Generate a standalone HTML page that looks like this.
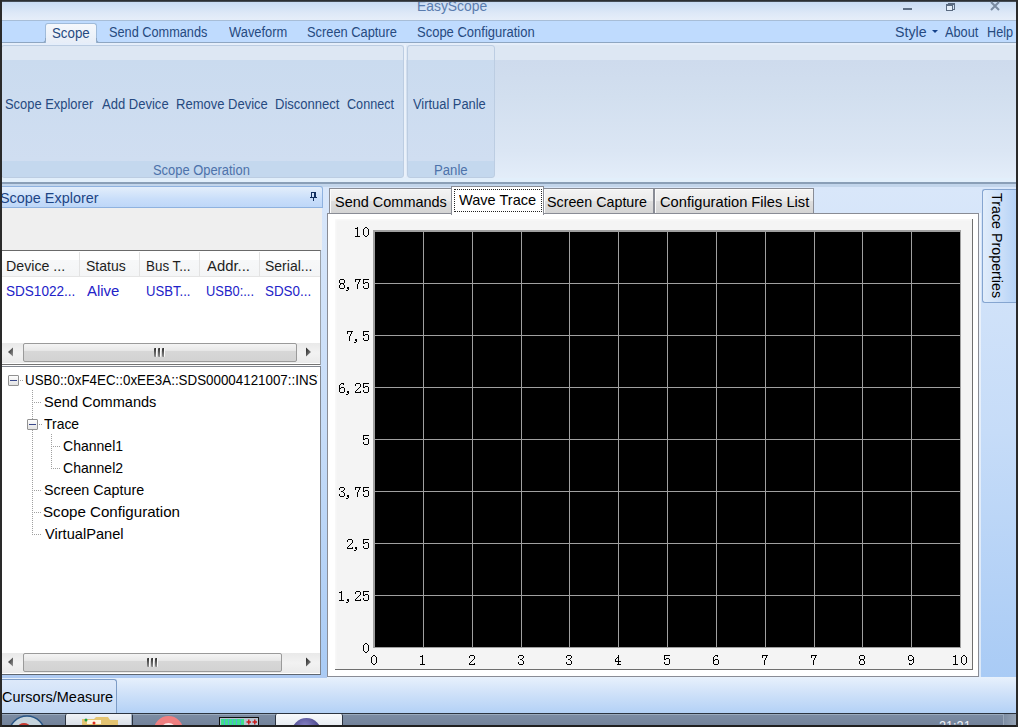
<!DOCTYPE html><html><head><meta charset="utf-8"><style>html,body{margin:0;padding:0;width:1018px;height:727px;overflow:hidden;position:relative;background:#303030}</style></head><body><div style="position:absolute;left:0px;top:0px;width:1018px;height:727px;background:#303030"></div>
<div style="position:absolute;left:2px;top:2px;width:1014px;height:18px;background:linear-gradient(#c9dbf2,#dde8f7 60%,#e6eef9)"></div>
<div style="position:absolute;left:416.79px;top:-8px;height:30px;line-height:30px;font-family:'Liberation Sans', sans-serif;font-size:13.8px;color:#5a7cae;white-space:nowrap;transform:scaleX(1.0059);transform-origin:0 0;">EasyScope</div>
<div style="position:absolute;left:2px;top:0px;width:1014px;height:2px;background:linear-gradient(#202020,#505a66)"></div>
<div style="position:absolute;left:903px;top:8px;width:9px;height:2px;background:#5e6e84"></div>
<svg style="position:absolute;left:0;top:0" width="1018" height="14" shape-rendering="crispEdges"><path fill="#e6eef8" d="M947 6h5v4h-5z"/><path fill="#5a6a80" d="M948 3h7v1h-7z M953 4h2v1h-2z M954 5h1v5h-1z M953 9h1v1h-1z M946 4h7v2h-7z M946 6h1v5h-1z M952 6h1v5h-1z M946 10h7v1h-7z"/></svg>
<svg style="position:absolute;left:988px;top:0px" width="14" height="12"><path d="M3 2 L11 10 M11 2 L3 10" stroke="#7a8aa0" stroke-width="2"/></svg>
<div style="position:absolute;left:2px;top:20px;width:1014px;height:1px;background:#a7bdd7"></div>
<div style="position:absolute;left:2px;top:21px;width:1014px;height:21px;background:#bfdbfe"></div>
<div style="position:absolute;left:2px;top:42px;width:1014px;height:1px;background:#8ea6c1"></div>
<div style="position:absolute;left:45px;top:23px;width:50px;height:20px;border:1px solid #a0bbda;border-bottom:none;border-radius:3px 3px 0 0;background:linear-gradient(#f5f8fc,#e6edf7)"></div>
<div style="position:absolute;left:41px;top:38px;width:4px;height:4px;border-right:1px solid #8ea6c1;border-bottom:1px solid #8ea6c1;border-bottom-right-radius:3px;background:#bfdbfe"></div>
<div style="position:absolute;left:96px;top:38px;width:4px;height:4px;border-left:1px solid #8ea6c1;border-bottom:1px solid #8ea6c1;border-bottom-left-radius:3px;background:#bfdbfe"></div>
<div style="position:absolute;left:51.64px;top:19px;height:30px;line-height:30px;font-family:'Liberation Sans', sans-serif;font-size:13.8px;color:#264a80;white-space:nowrap;transform:scaleX(0.9632);transform-origin:0 0;">Scope</div>
<div style="position:absolute;left:108.58px;top:18px;height:30px;line-height:30px;font-family:'Liberation Sans', sans-serif;font-size:13.8px;color:#264a80;white-space:nowrap;transform:scaleX(0.9226);transform-origin:0 0;">Send Commands</div>
<div style="position:absolute;left:228.50px;top:18px;height:30px;line-height:30px;font-family:'Liberation Sans', sans-serif;font-size:13.8px;color:#264a80;white-space:nowrap;transform:scaleX(0.9355);transform-origin:0 0;">Waveform</div>
<div style="position:absolute;left:307.47px;top:18px;height:30px;line-height:30px;font-family:'Liberation Sans', sans-serif;font-size:13.8px;color:#264a80;white-space:nowrap;transform:scaleX(0.9305);transform-origin:0 0;">Screen Capture</div>
<div style="position:absolute;left:417.26px;top:18px;height:30px;line-height:30px;font-family:'Liberation Sans', sans-serif;font-size:13.8px;color:#264a80;white-space:nowrap;transform:scaleX(0.9415);transform-origin:0 0;">Scope Configuration</div>
<div style="position:absolute;left:895.27px;top:18px;height:30px;line-height:30px;font-family:'Liberation Sans', sans-serif;font-size:13.8px;color:#264a80;white-space:nowrap;transform:scaleX(1.0276);transform-origin:0 0;">Style</div>
<svg style="position:absolute;left:932px;top:30px" width="6" height="4"><path d="M0 0 L6 0 L3 3 Z" fill="#15428b"/></svg>
<div style="position:absolute;left:945.00px;top:18px;height:30px;line-height:30px;font-family:'Liberation Sans', sans-serif;font-size:13.8px;color:#264a80;white-space:nowrap;transform:scaleX(0.9250);transform-origin:0 0;">About</div>
<div style="position:absolute;left:987.08px;top:18px;height:30px;line-height:30px;font-family:'Liberation Sans', sans-serif;font-size:13.8px;color:#264a80;white-space:nowrap;transform:scaleX(0.9185);transform-origin:0 0;">Help</div>
<div style="position:absolute;left:2px;top:43px;width:1014px;height:135px;background:linear-gradient(#dde7f3 0,#dde7f3 17px,#cedbed 17px,#d2dfef 40%,#dbe6f4 80%,#e3edf9 100%)"></div>
<div style="position:absolute;left:2px;top:43px;width:1014px;height:2px;background:#e5eefa"></div>
<div style="position:absolute;left:1px;top:45px;width:401px;height:131px;border:1px solid #bccde2;border-radius:3px;background:linear-gradient(#dde7f3 0,#dde7f3 14px,#cadbef 14px,#d0def1 115px,#c4d8ee 115px,#c4d8ee)"></div>
<div style="position:absolute;left:404px;top:45px;width:2px;height:132px;background:#eaf1fa"></div>
<div style="position:absolute;left:407px;top:45px;width:86px;height:131px;border:1px solid #bccde2;border-radius:3px;background:linear-gradient(#dde7f3 0,#dde7f3 14px,#cadbef 14px,#d0def1 115px,#c4d8ee 115px,#c4d8ee)"></div>
<div style="position:absolute;left:153.46px;top:156px;height:30px;line-height:30px;font-family:'Liberation Sans', sans-serif;font-size:13.8px;color:#4d72aa;white-space:nowrap;transform:scaleX(0.9353);transform-origin:0 0;">Scope Operation</div>
<div style="position:absolute;left:433.65px;top:156px;height:30px;line-height:30px;font-family:'Liberation Sans', sans-serif;font-size:13.8px;color:#4d72aa;white-space:nowrap;transform:scaleX(0.9529);transform-origin:0 0;">Panle</div>
<div style="position:absolute;left:5.26px;top:90px;height:30px;line-height:30px;font-family:'Liberation Sans', sans-serif;font-size:13.8px;color:#264a80;white-space:nowrap;transform:scaleX(0.9362);transform-origin:0 0;">Scope Explorer</div>
<div style="position:absolute;left:101.70px;top:90px;height:30px;line-height:30px;font-family:'Liberation Sans', sans-serif;font-size:13.8px;color:#264a80;white-space:nowrap;transform:scaleX(0.9443);transform-origin:0 0;">Add Device</div>
<div style="position:absolute;left:175.56px;top:90px;height:30px;line-height:30px;font-family:'Liberation Sans', sans-serif;font-size:13.8px;color:#264a80;white-space:nowrap;transform:scaleX(0.9427);transform-origin:0 0;">Remove Device</div>
<div style="position:absolute;left:274.56px;top:90px;height:30px;line-height:30px;font-family:'Liberation Sans', sans-serif;font-size:13.8px;color:#264a80;white-space:nowrap;transform:scaleX(0.9441);transform-origin:0 0;">Disconnect</div>
<div style="position:absolute;left:347.20px;top:90px;height:30px;line-height:30px;font-family:'Liberation Sans', sans-serif;font-size:13.8px;color:#264a80;white-space:nowrap;transform:scaleX(0.9154);transform-origin:0 0;">Connect</div>
<div style="position:absolute;left:413.40px;top:90px;height:30px;line-height:30px;font-family:'Liberation Sans', sans-serif;font-size:13.8px;color:#264a80;white-space:nowrap;transform:scaleX(0.9333);transform-origin:0 0;">Virtual Panle</div>
<div style="position:absolute;left:2px;top:178px;width:1014px;height:4px;background:#e2effb"></div>
<div style="position:absolute;left:2px;top:182px;width:1014px;height:2px;background:#8a9fb7"></div>
<div style="position:absolute;left:2px;top:184px;width:1014px;height:3px;background:#c2d5eb"></div>
<div style="position:absolute;left:2px;top:187px;width:1014px;height:490px;background:linear-gradient(#d9e7fa,#c6dcf8 50%,#a9cbf5)"></div>
<div style="position:absolute;left:2px;top:677px;width:1014px;height:36px;background:linear-gradient(#e8f1fc,#d2e3f9 40%,#b3d1f6)"></div>
<div style="position:absolute;left:2px;top:675px;width:325px;height:3px;background:#aecaf2"></div>
<div style="position:absolute;left:2px;top:186px;width:320px;height:20px;border:1px solid #8fb2df;border-left:none;border-radius:0 3px 0 0;background:linear-gradient(#e3eefb,#c9defa 60%,#bed7f8)"></div>
<div style="position:absolute;left:-0.06px;top:183px;height:30px;line-height:30px;font-family:'Liberation Sans', sans-serif;font-size:15.0px;color:#1d4585;white-space:nowrap;transform:scaleX(0.9608);transform-origin:0 0;">Scope Explorer</div>
<svg style="position:absolute;left:309px;top:192px" width="10" height="10" shape-rendering="crispEdges"><path fill="#13305f" d="M2 0h5v1h-5z M2 1h1v4h-1z M5 1h2v4h-2z M1 5h7v1h-7z M4 6h1v3h-1z"/></svg>
<div style="position:absolute;left:2px;top:208px;width:320px;height:42px;background:#efefef"></div>
<div style="position:absolute;left:2px;top:250px;width:318px;height:114px;background:#fff;border-top:1px solid #6a6a6a;border-right:1px solid #9aa0a8"></div>
<div style="position:absolute;left:2px;top:251px;width:318px;height:25px;background:linear-gradient(#fff 0,#fff 9px,#f7f8f9 9px,#f4f5f6)"></div>
<div style="position:absolute;left:2px;top:276px;width:318px;height:1px;background:#e5e5e5"></div>
<div style="position:absolute;left:79px;top:252px;width:1px;height:24px;background:#e3e3e3"></div>
<div style="position:absolute;left:139px;top:252px;width:1px;height:24px;background:#e3e3e3"></div>
<div style="position:absolute;left:199px;top:252px;width:1px;height:24px;background:#e3e3e3"></div>
<div style="position:absolute;left:259px;top:252px;width:1px;height:24px;background:#e3e3e3"></div>
<div style="position:absolute;left:6.41px;top:251px;height:30px;line-height:30px;font-family:'Liberation Sans', sans-serif;font-size:14.3px;color:#1e1e1e;white-space:nowrap;transform:scaleX(0.9931);transform-origin:0 0;">Device ...</div>
<div style="position:absolute;left:6.45px;top:276px;height:30px;line-height:30px;font-family:'Liberation Sans', sans-serif;font-size:14.3px;color:#2222c8;white-space:nowrap;transform:scaleX(0.9479);transform-origin:0 0;">SDS1022...</div>
<div style="position:absolute;left:85.52px;top:251px;height:30px;line-height:30px;font-family:'Liberation Sans', sans-serif;font-size:14.3px;color:#1e1e1e;white-space:nowrap;transform:scaleX(0.9800);transform-origin:0 0;">Status</div>
<div style="position:absolute;left:86.50px;top:276px;height:30px;line-height:30px;font-family:'Liberation Sans', sans-serif;font-size:14.3px;color:#2222c8;white-space:nowrap;transform:scaleX(1.0419);transform-origin:0 0;">Alive</div>
<div style="position:absolute;left:145.66px;top:251px;height:30px;line-height:30px;font-family:'Liberation Sans', sans-serif;font-size:14.3px;color:#1e1e1e;white-space:nowrap;transform:scaleX(0.9370);transform-origin:0 0;">Bus T...</div>
<div style="position:absolute;left:145.68px;top:276px;height:30px;line-height:30px;font-family:'Liberation Sans', sans-serif;font-size:14.3px;color:#2222c8;white-space:nowrap;transform:scaleX(0.9170);transform-origin:0 0;">USBT...</div>
<div style="position:absolute;left:206.50px;top:251px;height:30px;line-height:30px;font-family:'Liberation Sans', sans-serif;font-size:14.3px;color:#1e1e1e;white-space:nowrap;transform:scaleX(1.0375);transform-origin:0 0;">Addr...</div>
<div style="position:absolute;left:205.60px;top:276px;height:30px;line-height:30px;font-family:'Liberation Sans', sans-serif;font-size:14.3px;color:#2222c8;white-space:nowrap;transform:scaleX(0.9020);transform-origin:0 0;">USB0:...</div>
<div style="position:absolute;left:265.02px;top:251px;height:30px;line-height:30px;font-family:'Liberation Sans', sans-serif;font-size:14.3px;color:#1e1e1e;white-space:nowrap;transform:scaleX(0.9787);transform-origin:0 0;">Serial...</div>
<div style="position:absolute;left:265.06px;top:276px;height:30px;line-height:30px;font-family:'Liberation Sans', sans-serif;font-size:14.3px;color:#2222c8;white-space:nowrap;transform:scaleX(0.9362);transform-origin:0 0;">SDS0...</div>
<div style="position:absolute;left:2px;top:343px;width:318px;height:20px;background:linear-gradient(#e9e9e9,#f2f2f2 50%,#eaeaea)"></div>
<svg style="position:absolute;left:7px;top:347px" width="8" height="11"><defs><linearGradient id="ga343" x1="0" y1="0" x2="1" y2="1"><stop offset="0" stop-color="#202020"/><stop offset="1" stop-color="#9a9a9a"/></linearGradient></defs><path d="M6 0.5 L6 9.5 L1 5 Z" fill="url(#ga343)"/></svg>
<svg style="position:absolute;left:305px;top:347px" width="8" height="11"><defs><linearGradient id="gb343" x1="0" y1="0" x2="1" y2="1"><stop offset="0" stop-color="#202020"/><stop offset="1" stop-color="#9a9a9a"/></linearGradient></defs><path d="M1 0.5 L1 9.5 L6 5 Z" fill="url(#gb343)"/></svg>
<div style="position:absolute;left:23px;top:343px;width:272px;height:17px;border:1px solid #9a9a9a;border-radius:2px;background:linear-gradient(#f4f4f4,#e8e8e8 38%,#d7d7d7 42%,#d2d2d2)"></div>
<div style="position:absolute;left:154px;top:348px;width:2px;height:9px;background:linear-gradient(#2e2e2e,#909090);border-right:1px solid #fafafa;border-radius:1px"></div>
<div style="position:absolute;left:158px;top:348px;width:2px;height:9px;background:linear-gradient(#2e2e2e,#909090);border-right:1px solid #fafafa;border-radius:1px"></div>
<div style="position:absolute;left:162px;top:348px;width:2px;height:9px;background:linear-gradient(#2e2e2e,#909090);border-right:1px solid #fafafa;border-radius:1px"></div>
<div style="position:absolute;left:2px;top:364px;width:318px;height:1px;background:#747474"></div>
<div style="position:absolute;left:2px;top:365px;width:318px;height:1px;background:#fdfdfd"></div>
<div style="position:absolute;left:2px;top:366px;width:319px;height:309px;background:#fff;border-top:1px solid #828790;border-right:1px solid #828790;border-bottom:1px solid #5f6670;box-sizing:border-box"></div>
<div style="position:absolute;left:2px;top:367px;width:316px;height:286px;overflow:hidden">
<div style="position:absolute;left:22.61px;top:-2px;height:30px;line-height:30px;font-family:'Liberation Sans', sans-serif;font-size:15.0px;color:#000;white-space:nowrap;transform:scaleX(0.8902);transform-origin:0 0;">USB0::0xF4EC::0xEE3A::SDS00004121007::INSTR</div>
<div style="position:absolute;left:41.53px;top:20px;height:30px;line-height:30px;font-family:'Liberation Sans', sans-serif;font-size:15.0px;color:#000;white-space:nowrap;transform:scaleX(0.9696);transform-origin:0 0;">Send Commands</div>
<div style="position:absolute;left:42.40px;top:42px;height:30px;line-height:30px;font-family:'Liberation Sans', sans-serif;font-size:15.0px;color:#000;white-space:nowrap;transform:scaleX(0.9289);transform-origin:0 0;">Trace</div>
<div style="position:absolute;left:61.10px;top:64px;height:30px;line-height:30px;font-family:'Liberation Sans', sans-serif;font-size:15.0px;color:#000;white-space:nowrap;transform:scaleX(0.9359);transform-origin:0 0;">Channel1</div>
<div style="position:absolute;left:61.10px;top:86px;height:30px;line-height:30px;font-family:'Liberation Sans', sans-serif;font-size:15.0px;color:#000;white-space:nowrap;transform:scaleX(0.9359);transform-origin:0 0;">Channel2</div>
<div style="position:absolute;left:41.55px;top:108px;height:30px;line-height:30px;font-family:'Liberation Sans', sans-serif;font-size:15.0px;color:#000;white-space:nowrap;transform:scaleX(0.9529);transform-origin:0 0;">Screen Capture</div>
<div style="position:absolute;left:41.49px;top:130px;height:30px;line-height:30px;font-family:'Liberation Sans', sans-serif;font-size:15.0px;color:#000;white-space:nowrap;transform:scaleX(1.0075);transform-origin:0 0;">Scope Configuration</div>
<div style="position:absolute;left:42.50px;top:152px;height:30px;line-height:30px;font-family:'Liberation Sans', sans-serif;font-size:15.0px;color:#000;white-space:nowrap;transform:scaleX(0.9750);transform-origin:0 0;">VirtualPanel</div>
</div>
<div style="position:absolute;left:32px;top:390px;width:1px;height:146px;background:repeating-linear-gradient(#a0a0a0 0 1px,transparent 1px 2px)"></div>
<div style="position:absolute;left:34px;top:402px;width:8px;height:1px;background:repeating-linear-gradient(90deg,#a0a0a0 0 1px,transparent 1px 2px)"></div>
<div style="position:absolute;left:34px;top:490px;width:8px;height:1px;background:repeating-linear-gradient(90deg,#a0a0a0 0 1px,transparent 1px 2px)"></div>
<div style="position:absolute;left:34px;top:512px;width:8px;height:1px;background:repeating-linear-gradient(90deg,#a0a0a0 0 1px,transparent 1px 2px)"></div>
<div style="position:absolute;left:34px;top:534px;width:8px;height:1px;background:repeating-linear-gradient(90deg,#a0a0a0 0 1px,transparent 1px 2px)"></div>
<div style="position:absolute;left:20px;top:380px;width:4px;height:1px;background:repeating-linear-gradient(90deg,#a0a0a0 0 1px,transparent 1px 2px)"></div>
<div style="position:absolute;left:39px;top:424px;width:4px;height:1px;background:repeating-linear-gradient(90deg,#a0a0a0 0 1px,transparent 1px 2px)"></div>
<div style="position:absolute;left:51px;top:434px;width:1px;height:36px;background:repeating-linear-gradient(#a0a0a0 0 1px,transparent 1px 2px)"></div>
<div style="position:absolute;left:53px;top:446px;width:8px;height:1px;background:repeating-linear-gradient(90deg,#a0a0a0 0 1px,transparent 1px 2px)"></div>
<div style="position:absolute;left:53px;top:468px;width:8px;height:1px;background:repeating-linear-gradient(90deg,#a0a0a0 0 1px,transparent 1px 2px)"></div>
<div style="position:absolute;left:8px;top:375px;width:9px;height:9px;border:1px solid #919191;border-radius:1px;background:linear-gradient(#fdfdfd,#e2e2e2)"></div>
<div style="position:absolute;left:10px;top:380px;width:7px;height:1px;background:#39488a"></div>
<div style="position:absolute;left:27px;top:419px;width:9px;height:9px;border:1px solid #919191;border-radius:1px;background:linear-gradient(#fdfdfd,#e2e2e2)"></div>
<div style="position:absolute;left:29px;top:424px;width:7px;height:1px;background:#39488a"></div>
<div style="position:absolute;left:2px;top:653px;width:318px;height:20px;background:linear-gradient(#e9e9e9,#f2f2f2 50%,#eaeaea)"></div>
<svg style="position:absolute;left:7px;top:657px" width="8" height="11"><defs><linearGradient id="ga653" x1="0" y1="0" x2="1" y2="1"><stop offset="0" stop-color="#202020"/><stop offset="1" stop-color="#9a9a9a"/></linearGradient></defs><path d="M6 0.5 L6 9.5 L1 5 Z" fill="url(#ga653)"/></svg>
<svg style="position:absolute;left:305px;top:657px" width="8" height="11"><defs><linearGradient id="gb653" x1="0" y1="0" x2="1" y2="1"><stop offset="0" stop-color="#202020"/><stop offset="1" stop-color="#9a9a9a"/></linearGradient></defs><path d="M1 0.5 L1 9.5 L6 5 Z" fill="url(#gb653)"/></svg>
<div style="position:absolute;left:23px;top:653px;width:257px;height:17px;border:1px solid #9a9a9a;border-radius:2px;background:linear-gradient(#f4f4f4,#e8e8e8 38%,#d7d7d7 42%,#d2d2d2)"></div>
<div style="position:absolute;left:147px;top:658px;width:2px;height:9px;background:linear-gradient(#2e2e2e,#909090);border-right:1px solid #fafafa;border-radius:1px"></div>
<div style="position:absolute;left:151px;top:658px;width:2px;height:9px;background:linear-gradient(#2e2e2e,#909090);border-right:1px solid #fafafa;border-radius:1px"></div>
<div style="position:absolute;left:155px;top:658px;width:2px;height:9px;background:linear-gradient(#2e2e2e,#909090);border-right:1px solid #fafafa;border-radius:1px"></div>
<div style="position:absolute;left:327px;top:213px;width:652px;height:464px;background:#fff;border:1px solid #898c95;box-sizing:border-box"></div>
<div style="position:absolute;left:329px;top:188px;width:121px;height:24px;border:1px solid #898c95;border-bottom:none;background:linear-gradient(#f3f3f3,#ececec 50%,#dfdfdf 51%,#d4d4d4);box-shadow:inset 1px 1px #fbfbfb"></div>
<div style="position:absolute;left:543px;top:188px;width:109px;height:24px;border:1px solid #898c95;border-bottom:none;background:linear-gradient(#f3f3f3,#ececec 50%,#dfdfdf 51%,#d4d4d4);box-shadow:inset 1px 1px #fbfbfb"></div>
<div style="position:absolute;left:654px;top:188px;width:158px;height:24px;border:1px solid #898c95;border-bottom:none;background:linear-gradient(#f3f3f3,#ececec 50%,#dfdfdf 51%,#d4d4d4);box-shadow:inset 1px 1px #fbfbfb"></div>
<div style="position:absolute;left:451px;top:186px;width:91px;height:28px;border:1px solid #898c95;border-bottom:none;background:#fff"></div>
<div style="position:absolute;left:334.63px;top:187px;height:30px;line-height:30px;font-family:'Liberation Sans', sans-serif;font-size:15.0px;color:#000;white-space:nowrap;transform:scaleX(0.9652);transform-origin:0 0;">Send Commands</div>
<div style="position:absolute;left:547.35px;top:187px;height:30px;line-height:30px;font-family:'Liberation Sans', sans-serif;font-size:15.0px;color:#000;white-space:nowrap;transform:scaleX(0.9519);transform-origin:0 0;">Screen Capture</div>
<div style="position:absolute;left:660.30px;top:187px;height:30px;line-height:30px;font-family:'Liberation Sans', sans-serif;font-size:15.0px;color:#000;white-space:nowrap;transform:scaleX(0.9784);transform-origin:0 0;">Configuration Files List</div>
<div style="position:absolute;left:459.00px;top:185px;height:30px;line-height:30px;font-family:'Liberation Sans', sans-serif;font-size:15.0px;color:#000;white-space:nowrap;transform:scaleX(0.9709);transform-origin:0 0;">Wave Trace</div>
<div style="position:absolute;left:454px;top:189px;width:88px;height:23px;border:1px dotted #222;border-radius:1px;box-sizing:border-box"></div>
<div style="position:absolute;left:335px;top:219px;width:637px;height:450px;background:#f4f4f4;border-right:1px solid #6f6f6f;border-bottom:1px solid #6f6f6f;box-shadow:inset 1px 1px 2px #fafafa"></div>
<div style="position:absolute;left:373px;top:230px;width:588px;height:418px;background:#a0a0a0"></div>
<div style="position:absolute;left:375px;top:232px;width:585px;height:415px;background:#000"></div>
<div style="position:absolute;left:423px;top:232px;width:1px;height:415px;background:#a0a0a0"></div>
<div style="position:absolute;left:472px;top:232px;width:1px;height:415px;background:#a0a0a0"></div>
<div style="position:absolute;left:521px;top:232px;width:1px;height:415px;background:#a0a0a0"></div>
<div style="position:absolute;left:569px;top:232px;width:1px;height:415px;background:#a0a0a0"></div>
<div style="position:absolute;left:618px;top:232px;width:1px;height:415px;background:#a0a0a0"></div>
<div style="position:absolute;left:667px;top:232px;width:1px;height:415px;background:#a0a0a0"></div>
<div style="position:absolute;left:716px;top:232px;width:1px;height:415px;background:#a0a0a0"></div>
<div style="position:absolute;left:765px;top:232px;width:1px;height:415px;background:#a0a0a0"></div>
<div style="position:absolute;left:814px;top:232px;width:1px;height:415px;background:#a0a0a0"></div>
<div style="position:absolute;left:862px;top:232px;width:1px;height:415px;background:#a0a0a0"></div>
<div style="position:absolute;left:911px;top:232px;width:1px;height:415px;background:#a0a0a0"></div>
<div style="position:absolute;left:375px;top:283px;width:585px;height:1px;background:#a0a0a0"></div>
<div style="position:absolute;left:375px;top:335px;width:585px;height:1px;background:#a0a0a0"></div>
<div style="position:absolute;left:375px;top:387px;width:585px;height:1px;background:#a0a0a0"></div>
<div style="position:absolute;left:375px;top:439px;width:585px;height:1px;background:#a0a0a0"></div>
<div style="position:absolute;left:375px;top:491px;width:585px;height:1px;background:#a0a0a0"></div>
<div style="position:absolute;left:375px;top:543px;width:585px;height:1px;background:#a0a0a0"></div>
<div style="position:absolute;left:375px;top:595px;width:585px;height:1px;background:#a0a0a0"></div>
<div style="position:absolute;left:375px;top:647px;width:586px;height:1px;background:#a0a0a0"></div>
<svg style="position:absolute;left:0;top:0" width="1018" height="727" shape-rendering="crispEdges"><path fill="#000" d="M357 227h1v1h-1zM355 228h3v1h-3zM357 229h1v1h-1zM357 230h1v1h-1zM357 231h1v1h-1zM357 232h1v1h-1zM357 233h1v1h-1zM357 234h1v1h-1zM357 235h1v1h-1zM355 236h5v1h-5zM365 227h2v1h-2zM364 228h1v1h-1zM367 228h1v1h-1zM363 229h1v1h-1zM368 229h1v1h-1zM363 230h1v1h-1zM368 230h1v1h-1zM363 231h1v1h-1zM368 231h1v1h-1zM363 232h1v1h-1zM368 232h1v1h-1zM363 233h1v1h-1zM368 233h1v1h-1zM363 234h1v1h-1zM368 234h1v1h-1zM364 235h1v1h-1zM367 235h1v1h-1zM365 236h2v1h-2zM340 279h4v1h-4zM339 280h1v1h-1zM344 280h1v1h-1zM339 281h1v1h-1zM344 281h1v1h-1zM339 282h1v1h-1zM344 282h1v1h-1zM340 283h4v1h-4zM340 284h1v1h-1zM343 284h1v1h-1zM339 285h1v1h-1zM344 285h1v1h-1zM339 286h1v1h-1zM344 286h1v1h-1zM339 287h1v1h-1zM344 287h1v1h-1zM340 288h4v1h-4zM347 287h2v1h-2zM347 288h2v1h-2zM348 289h1v1h-1zM346 290h2v1h-2zM355 279h6v1h-6zM355 280h1v1h-1zM359 280h1v1h-1zM355 281h1v1h-1zM359 281h1v1h-1zM358 282h1v1h-1zM358 283h1v1h-1zM357 284h1v1h-1zM357 285h1v1h-1zM357 286h1v1h-1zM357 287h1v1h-1zM357 288h1v1h-1zM363 279h6v1h-6zM363 280h1v1h-1zM363 281h1v1h-1zM363 282h1v1h-1zM365 282h3v1h-3zM363 283h2v1h-2zM368 283h1v1h-1zM368 284h1v1h-1zM368 285h1v1h-1zM363 286h1v1h-1zM368 286h1v1h-1zM363 287h1v1h-1zM368 287h1v1h-1zM364 288h4v1h-4zM347 331h6v1h-6zM347 332h1v1h-1zM351 332h1v1h-1zM347 333h1v1h-1zM351 333h1v1h-1zM350 334h1v1h-1zM350 335h1v1h-1zM349 336h1v1h-1zM349 337h1v1h-1zM349 338h1v1h-1zM349 339h1v1h-1zM349 340h1v1h-1zM355 339h2v1h-2zM355 340h2v1h-2zM356 341h1v1h-1zM354 342h2v1h-2zM363 331h6v1h-6zM363 332h1v1h-1zM363 333h1v1h-1zM363 334h1v1h-1zM365 334h3v1h-3zM363 335h2v1h-2zM368 335h1v1h-1zM368 336h1v1h-1zM368 337h1v1h-1zM363 338h1v1h-1zM368 338h1v1h-1zM363 339h1v1h-1zM368 339h1v1h-1zM364 340h4v1h-4zM341 383h3v1h-3zM340 384h1v1h-1zM343 384h1v1h-1zM339 385h1v1h-1zM339 386h1v1h-1zM339 387h1v1h-1zM341 387h3v1h-3zM339 388h2v1h-2zM344 388h1v1h-1zM339 389h1v1h-1zM344 389h1v1h-1zM339 390h1v1h-1zM344 390h1v1h-1zM339 391h1v1h-1zM344 391h1v1h-1zM340 392h4v1h-4zM347 391h2v1h-2zM347 392h2v1h-2zM348 393h1v1h-1zM346 394h2v1h-2zM356 383h4v1h-4zM355 384h1v1h-1zM360 384h1v1h-1zM355 385h1v1h-1zM360 385h1v1h-1zM360 386h1v1h-1zM359 387h1v1h-1zM358 388h1v1h-1zM357 389h1v1h-1zM356 390h1v1h-1zM355 391h1v1h-1zM360 391h1v1h-1zM355 392h6v1h-6zM363 383h6v1h-6zM363 384h1v1h-1zM363 385h1v1h-1zM363 386h1v1h-1zM365 386h3v1h-3zM363 387h2v1h-2zM368 387h1v1h-1zM368 388h1v1h-1zM368 389h1v1h-1zM363 390h1v1h-1zM368 390h1v1h-1zM363 391h1v1h-1zM368 391h1v1h-1zM364 392h4v1h-4zM363 435h6v1h-6zM363 436h1v1h-1zM363 437h1v1h-1zM363 438h1v1h-1zM365 438h3v1h-3zM363 439h2v1h-2zM368 439h1v1h-1zM368 440h1v1h-1zM368 441h1v1h-1zM363 442h1v1h-1zM368 442h1v1h-1zM363 443h1v1h-1zM368 443h1v1h-1zM364 444h4v1h-4zM340 487h4v1h-4zM339 488h1v1h-1zM344 488h1v1h-1zM339 489h1v1h-1zM344 489h1v1h-1zM343 490h1v1h-1zM341 491h2v1h-2zM343 492h1v1h-1zM344 493h1v1h-1zM339 494h1v1h-1zM344 494h1v1h-1zM339 495h1v1h-1zM344 495h1v1h-1zM340 496h4v1h-4zM347 495h2v1h-2zM347 496h2v1h-2zM348 497h1v1h-1zM346 498h2v1h-2zM355 487h6v1h-6zM355 488h1v1h-1zM359 488h1v1h-1zM355 489h1v1h-1zM359 489h1v1h-1zM358 490h1v1h-1zM358 491h1v1h-1zM357 492h1v1h-1zM357 493h1v1h-1zM357 494h1v1h-1zM357 495h1v1h-1zM357 496h1v1h-1zM363 487h6v1h-6zM363 488h1v1h-1zM363 489h1v1h-1zM363 490h1v1h-1zM365 490h3v1h-3zM363 491h2v1h-2zM368 491h1v1h-1zM368 492h1v1h-1zM368 493h1v1h-1zM363 494h1v1h-1zM368 494h1v1h-1zM363 495h1v1h-1zM368 495h1v1h-1zM364 496h4v1h-4zM348 539h4v1h-4zM347 540h1v1h-1zM352 540h1v1h-1zM347 541h1v1h-1zM352 541h1v1h-1zM352 542h1v1h-1zM351 543h1v1h-1zM350 544h1v1h-1zM349 545h1v1h-1zM348 546h1v1h-1zM347 547h1v1h-1zM352 547h1v1h-1zM347 548h6v1h-6zM355 547h2v1h-2zM355 548h2v1h-2zM356 549h1v1h-1zM354 550h2v1h-2zM363 539h6v1h-6zM363 540h1v1h-1zM363 541h1v1h-1zM363 542h1v1h-1zM365 542h3v1h-3zM363 543h2v1h-2zM368 543h1v1h-1zM368 544h1v1h-1zM368 545h1v1h-1zM363 546h1v1h-1zM368 546h1v1h-1zM363 547h1v1h-1zM368 547h1v1h-1zM364 548h4v1h-4zM341 591h1v1h-1zM339 592h3v1h-3zM341 593h1v1h-1zM341 594h1v1h-1zM341 595h1v1h-1zM341 596h1v1h-1zM341 597h1v1h-1zM341 598h1v1h-1zM341 599h1v1h-1zM339 600h5v1h-5zM347 599h2v1h-2zM347 600h2v1h-2zM348 601h1v1h-1zM346 602h2v1h-2zM356 591h4v1h-4zM355 592h1v1h-1zM360 592h1v1h-1zM355 593h1v1h-1zM360 593h1v1h-1zM360 594h1v1h-1zM359 595h1v1h-1zM358 596h1v1h-1zM357 597h1v1h-1zM356 598h1v1h-1zM355 599h1v1h-1zM360 599h1v1h-1zM355 600h6v1h-6zM363 591h6v1h-6zM363 592h1v1h-1zM363 593h1v1h-1zM363 594h1v1h-1zM365 594h3v1h-3zM363 595h2v1h-2zM368 595h1v1h-1zM368 596h1v1h-1zM368 597h1v1h-1zM363 598h1v1h-1zM368 598h1v1h-1zM363 599h1v1h-1zM368 599h1v1h-1zM364 600h4v1h-4zM365 643h2v1h-2zM364 644h1v1h-1zM367 644h1v1h-1zM363 645h1v1h-1zM368 645h1v1h-1zM363 646h1v1h-1zM368 646h1v1h-1zM363 647h1v1h-1zM368 647h1v1h-1zM363 648h1v1h-1zM368 648h1v1h-1zM363 649h1v1h-1zM368 649h1v1h-1zM363 650h1v1h-1zM368 650h1v1h-1zM364 651h1v1h-1zM367 651h1v1h-1zM365 652h2v1h-2zM373 655h2v1h-2zM372 656h1v1h-1zM375 656h1v1h-1zM371 657h1v1h-1zM376 657h1v1h-1zM371 658h1v1h-1zM376 658h1v1h-1zM371 659h1v1h-1zM376 659h1v1h-1zM371 660h1v1h-1zM376 660h1v1h-1zM371 661h1v1h-1zM376 661h1v1h-1zM371 662h1v1h-1zM376 662h1v1h-1zM372 663h1v1h-1zM375 663h1v1h-1zM373 664h2v1h-2zM422 655h1v1h-1zM420 656h3v1h-3zM422 657h1v1h-1zM422 658h1v1h-1zM422 659h1v1h-1zM422 660h1v1h-1zM422 661h1v1h-1zM422 662h1v1h-1zM422 663h1v1h-1zM420 664h5v1h-5zM470 655h4v1h-4zM469 656h1v1h-1zM474 656h1v1h-1zM469 657h1v1h-1zM474 657h1v1h-1zM474 658h1v1h-1zM473 659h1v1h-1zM472 660h1v1h-1zM471 661h1v1h-1zM470 662h1v1h-1zM469 663h1v1h-1zM474 663h1v1h-1zM469 664h6v1h-6zM519 655h4v1h-4zM518 656h1v1h-1zM523 656h1v1h-1zM518 657h1v1h-1zM523 657h1v1h-1zM522 658h1v1h-1zM520 659h2v1h-2zM522 660h1v1h-1zM523 661h1v1h-1zM518 662h1v1h-1zM523 662h1v1h-1zM518 663h1v1h-1zM523 663h1v1h-1zM519 664h4v1h-4zM567 655h4v1h-4zM566 656h1v1h-1zM571 656h1v1h-1zM566 657h1v1h-1zM571 657h1v1h-1zM570 658h1v1h-1zM568 659h2v1h-2zM570 660h1v1h-1zM571 661h1v1h-1zM566 662h1v1h-1zM571 662h1v1h-1zM566 663h1v1h-1zM571 663h1v1h-1zM567 664h4v1h-4zM618 655h1v1h-1zM618 656h1v1h-1zM617 657h2v1h-2zM616 658h1v1h-1zM618 658h1v1h-1zM615 659h1v1h-1zM618 659h1v1h-1zM615 660h1v1h-1zM618 660h1v1h-1zM615 661h6v1h-6zM618 662h1v1h-1zM618 663h1v1h-1zM617 664h4v1h-4zM664 655h6v1h-6zM664 656h1v1h-1zM664 657h1v1h-1zM664 658h1v1h-1zM666 658h3v1h-3zM664 659h2v1h-2zM669 659h1v1h-1zM669 660h1v1h-1zM669 661h1v1h-1zM664 662h1v1h-1zM669 662h1v1h-1zM664 663h1v1h-1zM669 663h1v1h-1zM665 664h4v1h-4zM715 655h3v1h-3zM714 656h1v1h-1zM717 656h1v1h-1zM713 657h1v1h-1zM713 658h1v1h-1zM713 659h1v1h-1zM715 659h3v1h-3zM713 660h2v1h-2zM718 660h1v1h-1zM713 661h1v1h-1zM718 661h1v1h-1zM713 662h1v1h-1zM718 662h1v1h-1zM713 663h1v1h-1zM718 663h1v1h-1zM714 664h4v1h-4zM762 655h6v1h-6zM762 656h1v1h-1zM766 656h1v1h-1zM762 657h1v1h-1zM766 657h1v1h-1zM765 658h1v1h-1zM765 659h1v1h-1zM764 660h1v1h-1zM764 661h1v1h-1zM764 662h1v1h-1zM764 663h1v1h-1zM764 664h1v1h-1zM811 655h6v1h-6zM811 656h1v1h-1zM815 656h1v1h-1zM811 657h1v1h-1zM815 657h1v1h-1zM814 658h1v1h-1zM814 659h1v1h-1zM813 660h1v1h-1zM813 661h1v1h-1zM813 662h1v1h-1zM813 663h1v1h-1zM813 664h1v1h-1zM860 655h4v1h-4zM859 656h1v1h-1zM864 656h1v1h-1zM859 657h1v1h-1zM864 657h1v1h-1zM859 658h1v1h-1zM864 658h1v1h-1zM860 659h4v1h-4zM860 660h1v1h-1zM863 660h1v1h-1zM859 661h1v1h-1zM864 661h1v1h-1zM859 662h1v1h-1zM864 662h1v1h-1zM859 663h1v1h-1zM864 663h1v1h-1zM860 664h4v1h-4zM909 655h3v1h-3zM908 656h1v1h-1zM912 656h1v1h-1zM908 657h1v1h-1zM913 657h1v1h-1zM908 658h1v1h-1zM913 658h1v1h-1zM908 659h1v1h-1zM912 659h2v1h-2zM909 660h3v1h-3zM913 660h1v1h-1zM913 661h1v1h-1zM913 662h1v1h-1zM909 663h1v1h-1zM912 663h1v1h-1zM909 664h3v1h-3zM955 655h1v1h-1zM953 656h3v1h-3zM955 657h1v1h-1zM955 658h1v1h-1zM955 659h1v1h-1zM955 660h1v1h-1zM955 661h1v1h-1zM955 662h1v1h-1zM955 663h1v1h-1zM953 664h5v1h-5zM963 655h2v1h-2zM962 656h1v1h-1zM965 656h1v1h-1zM961 657h1v1h-1zM966 657h1v1h-1zM961 658h1v1h-1zM966 658h1v1h-1zM961 659h1v1h-1zM966 659h1v1h-1zM961 660h1v1h-1zM966 660h1v1h-1zM961 661h1v1h-1zM966 661h1v1h-1zM961 662h1v1h-1zM966 662h1v1h-1zM962 663h1v1h-1zM965 663h1v1h-1zM963 664h2v1h-2z"/></svg>
<div style="position:absolute;left:979px;top:213px;width:2px;height:464px;background:linear-gradient(#eef4fc,#dbe8f8)"></div>
<div style="position:absolute;left:982px;top:189px;width:34px;height:112px;border:1px solid #85a5d0;border-right:none;border-radius:3px 0 0 3px;background:linear-gradient(90deg,#e1edfb,#c8ddf8 60%,#b4d2f7)"></div>
<div style="position:absolute;left:1012.00px;top:193.20px;width:0;height:0"><div style="position:absolute;left:0;top:0;height:30px;line-height:30px;font-family:'Liberation Sans', sans-serif;font-size:15.0px;color:#000;white-space:nowrap;transform-origin:0 0;transform:rotate(90deg) scaleX(0.9527);">Trace Properties</div></div>
<div style="position:absolute;left:2px;top:679px;width:114px;height:34px;border:1px solid #7d9cc6;border-left:none;border-bottom:none;border-radius:0 3px 0 0;background:linear-gradient(#dde9fa,#c5dbf7)"></div>
<div style="position:absolute;left:1.90px;top:682px;height:30px;line-height:30px;font-family:'Liberation Sans', sans-serif;font-size:15.0px;color:#000;white-space:nowrap;transform:scaleX(0.9661);transform-origin:0 0;">Cursors/Measure</div>
<div style="position:absolute;left:2px;top:713px;width:1014px;height:1px;background:#2c3440"></div>
<div style="position:absolute;left:2px;top:714px;width:1014px;height:12px;background:linear-gradient(#9aaabd 0,#9aaabd 1px,#7c8ca3 1px,#72829a)"></div>
<svg style="position:absolute;left:2px;top:714px" width="60" height="12"><circle cx="25" cy="20" r="18" fill="#c5d3dc" stroke="#2a5686" stroke-width="1.6"/><ellipse cx="22" cy="13" rx="6" ry="4" fill="#c83a30"/></svg>
<div style="position:absolute;left:65px;top:714px;width:66px;height:12px;background:linear-gradient(#f0f3f7,#d8dee6);border-left:1px solid #2c3440;border-right:1px solid #2c3440;border-radius:2px 2px 0 0"></div>
<svg style="position:absolute;left:80px;top:717px" width="40" height="9"><path d="M2 2 L14 2 L16 0 L28 0 L30 3 L38 3 L38 9 L2 9 Z" fill="#e4c472"/><rect x="7" y="3" width="14" height="4" fill="#fff6e0"/><circle cx="6" cy="3" r="1.5" fill="#20a040"/><circle cx="14" cy="6" r="1.5" fill="#e03020"/></svg>
<div style="position:absolute;left:131px;top:714px;width:1px;height:12px;background:#a0aec0"></div>
<svg style="position:absolute;left:150px;top:714px" width="38" height="12"><circle cx="18.5" cy="17" r="11.5" fill="#fbeaea" stroke="#ef7f80" stroke-width="7"/></svg>
<div style="position:absolute;left:219px;top:717px;width:38px;height:10px;background:#b8c4d0;border:1px solid #101010"></div>
<div style="position:absolute;left:221px;top:719px;width:23px;height:8px;background:repeating-linear-gradient(90deg,#3ee08e 0 3px,#58a8d8 3px 4px)"></div>
<svg style="position:absolute;left:246px;top:718px" width="12" height="8"><path d="M0.5 4 H5 M2.8 1.5 V6.5 M6.5 4 H11 M8.8 1.5 V6.5" stroke="#c81818" stroke-width="1.4"/></svg>
<div style="position:absolute;left:275px;top:714px;width:66px;height:12px;background:linear-gradient(#f8fafc,#e6ebf1);border-left:1px solid #2c3440;border-right:1px solid #2c3440;border-radius:2px 2px 0 0"></div>
<svg style="position:absolute;left:290px;top:717px" width="34" height="10"><defs><radialGradient id="sph" cx="0.45" cy="0.3" r="0.7"><stop offset="0" stop-color="#8a86c8"/><stop offset="1" stop-color="#2e2a70"/></radialGradient></defs><circle cx="16.5" cy="16" r="15" fill="url(#sph)"/></svg>
<div style="position:absolute;left:938.80px;top:712px;height:30px;line-height:30px;font-family:'Liberation Sans', sans-serif;font-size:13.8px;color:#eef2f6;white-space:nowrap;transform:scaleX(0.9176);transform-origin:0 0;">21:21</div>
<div style="position:absolute;left:1003px;top:714px;width:1px;height:12px;background:#9aa8ba"></div>
<div style="position:absolute;left:1004px;top:714px;width:12px;height:12px;background:linear-gradient(90deg,#7e8ea4,#96a4b6)"></div>
<div style="position:absolute;left:0px;top:725px;width:1018px;height:2px;background:#202020"></div>
<div style="position:absolute;left:0px;top:0px;width:2px;height:727px;background:#2a2a2a"></div>
<div style="position:absolute;left:1016px;top:0px;width:2px;height:727px;background:#2a2a2a"></div></body></html>
